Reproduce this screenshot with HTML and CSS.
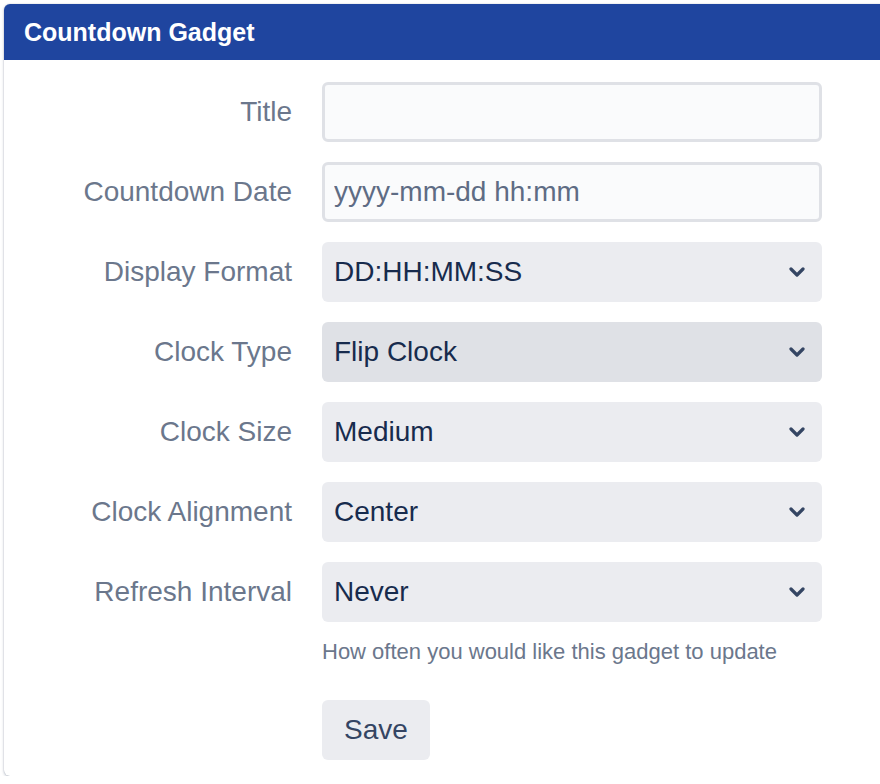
FILE: index.html
```html
<!DOCTYPE html>
<html>
<head>
<meta charset="utf-8">
<link rel="stylesheet" href="styles.css">
</head>
<body>
<div class="gadget">
  <div class="gadget-header">Countdown Gadget</div>
  <form class="gadget-form">
    <label class="field-label">Title</label>
    <div class="field"><input class="text-input" type="text"></div>

    <label class="field-label">Countdown Date</label>
    <div class="field"><input class="text-input" type="text" placeholder="yyyy-mm-dd hh:mm"></div>

    <label class="field-label">Display Format</label>
    <div class="field"><div class="select"><span>DD:HH:MM:SS</span><svg class="chev" width="16" height="10" viewBox="0 0 16 10"><path d="M2 2l6 6 6-6" fill="none" stroke="#344563" stroke-width="3.2" stroke-linecap="round" stroke-linejoin="round"/></svg></div></div>

    <label class="field-label">Clock Type</label>
    <div class="field"><div class="select hover"><span>Flip Clock</span><svg class="chev" width="16" height="10" viewBox="0 0 16 10"><path d="M2 2l6 6 6-6" fill="none" stroke="#344563" stroke-width="3.2" stroke-linecap="round" stroke-linejoin="round"/></svg></div></div>

    <label class="field-label">Clock Size</label>
    <div class="field"><div class="select"><span>Medium</span><svg class="chev" width="16" height="10" viewBox="0 0 16 10"><path d="M2 2l6 6 6-6" fill="none" stroke="#344563" stroke-width="3.2" stroke-linecap="round" stroke-linejoin="round"/></svg></div></div>

    <label class="field-label">Clock Alignment</label>
    <div class="field"><div class="select"><span>Center</span><svg class="chev" width="16" height="10" viewBox="0 0 16 10"><path d="M2 2l6 6 6-6" fill="none" stroke="#344563" stroke-width="3.2" stroke-linecap="round" stroke-linejoin="round"/></svg></div></div>

    <label class="field-label">Refresh Interval</label>
    <div class="field"><div class="select"><span>Never</span><svg class="chev" width="16" height="10" viewBox="0 0 16 10"><path d="M2 2l6 6 6-6" fill="none" stroke="#344563" stroke-width="3.2" stroke-linecap="round" stroke-linejoin="round"/></svg></div>
      <div class="help">How often you would like this gadget to update</div>
    </div>

    <div class="spacer"></div>
    <div class="actions"><button type="button" class="btn">Save</button></div>
  </form>
</div>
</body>
</html>
```
FILE: styles.css
```css
html, body {
  margin: 0;
  padding: 0;
  background: #ffffff;
}
body {
  padding: 4px 0 0 4px;
  font-family: "Liberation Sans", Arial, sans-serif;
}
.gadget {
  width: 884px;
  height: 772px;
  box-sizing: border-box;
  background: #fff;
  border-radius: 6px;
  box-shadow: 0 1px 3px rgba(9, 30, 66, 0.28), 0 0 1px rgba(9, 30, 66, 0.25);
  overflow: hidden;
}
.gadget-header {
  height: 56px;
  background: #1f459f;
  color: #fff;
  font-weight: bold;
  font-size: 25px;
  line-height: 56px;
  padding-left: 20px;
}
.gadget-form {
  display: grid;
  grid-template-columns: 288px 500px;
  column-gap: 30px;
  row-gap: 20px;
  padding-top: 22px;
  margin: 0;
}
.field-label {
  height: 60px;
  display: flex;
  align-items: center;
  justify-content: flex-end;
  font-size: 28px;
  color: #6b778c;
}
.field {
  display: flex;
  flex-direction: column;
}
.text-input {
  box-sizing: border-box;
  width: 500px;
  height: 60px;
  margin: 0;
  border: 3px solid #dfe1e6;
  border-radius: 6px;
  background: #fafbfc;
  padding: 0 9px;
  font-family: "Liberation Sans", Arial, sans-serif;
  font-size: 28px;
  color: #172b4d;
  outline: none;
}
.text-input::placeholder {
  color: #5e6c84;
  opacity: 1;
}
.select {
  box-sizing: border-box;
  height: 60px;
  border-radius: 6px;
  background: #ebecf0;
  display: flex;
  align-items: center;
  justify-content: space-between;
  padding: 0 17px 0 12px;
  font-size: 28px;
  color: #172b4d;
}
.select.hover {
  background: #dfe1e6;
}
.chev {
  display: block;
}
.help {
  margin-top: 17px;
  font-size: 22px;
  line-height: 25px;
  color: #6b778c;
}
.spacer {
  height: 0;
}
.actions {
  margin-top: 16px;
}
.btn {
  width: 108px;
  height: 60px;
  border: none;
  border-radius: 6px;
  background: #ebecf0;
  color: #344563;
  font-family: "Liberation Sans", Arial, sans-serif;
  font-size: 28px;
  padding: 0;
}
```
